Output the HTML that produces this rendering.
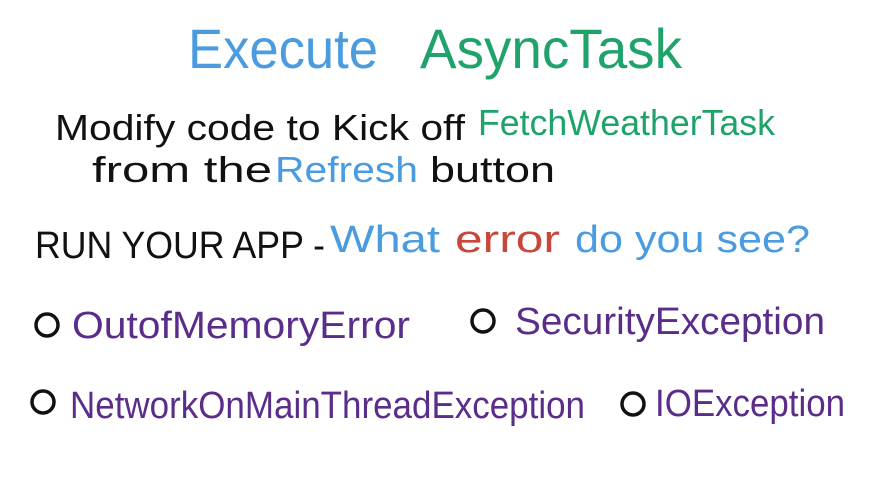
<!DOCTYPE html>
<html><head><meta charset="utf-8"><style>
html,body{margin:0;padding:0;background:#fff;width:889px;height:500px;overflow:hidden}
svg{display:block}
text{font-family:"Liberation Sans",sans-serif}
</style></head><body>
<svg width="889" height="500" viewBox="0 0 889 500" xmlns="http://www.w3.org/2000/svg">
<rect width="889" height="500" fill="#fff"/>
<text x="188" y="68" font-size="56" fill="#4a9be0" textLength="190" lengthAdjust="spacingAndGlyphs">Execute</text>
<text x="420" y="68" font-size="56" fill="#1fa36b" textLength="262" lengthAdjust="spacingAndGlyphs">AsyncTask</text>
<text x="55" y="140" font-size="36" fill="#111" textLength="410" lengthAdjust="spacingAndGlyphs">Modify code to Kick off</text>
<text x="478" y="135" font-size="36" fill="#1fa36b" textLength="297" lengthAdjust="spacingAndGlyphs">FetchWeatherTask</text>
<text x="92" y="182" font-size="36" fill="#111" textLength="180" lengthAdjust="spacingAndGlyphs">from the</text>
<text x="275" y="182" font-size="36" fill="#4a9be0" textLength="143" lengthAdjust="spacingAndGlyphs">Refresh</text>
<text x="430" y="182" font-size="36" fill="#111" textLength="125" lengthAdjust="spacingAndGlyphs">button</text>
<text x="35" y="258" font-size="38" fill="#111" textLength="290" lengthAdjust="spacingAndGlyphs">RUN YOUR APP -</text>
<text x="330" y="252" font-size="38" fill="#4a9be0" textLength="110" lengthAdjust="spacingAndGlyphs">What</text>
<text x="455" y="252" font-size="38" fill="#c9463a" textLength="105" lengthAdjust="spacingAndGlyphs">error</text>
<text x="575" y="252" font-size="38" fill="#4a9be0" textLength="235" lengthAdjust="spacingAndGlyphs">do you see?</text>
<g fill="none" stroke="#111" stroke-width="3.5">
<circle cx="47" cy="325" r="11"/>
<circle cx="483" cy="321" r="11"/>
<circle cx="43" cy="402" r="11"/>
<circle cx="633" cy="404" r="11"/>
</g>
<g fill="#5a2d8a" font-size="38">
<text x="72" y="338" textLength="338" lengthAdjust="spacingAndGlyphs">OutofMemoryError</text>
<text x="515" y="334" textLength="310" lengthAdjust="spacingAndGlyphs">SecurityException</text>
<text x="70" y="418" textLength="515" lengthAdjust="spacingAndGlyphs">NetworkOnMainThreadException</text>
<text x="655" y="416" textLength="190" lengthAdjust="spacingAndGlyphs">IOException</text>
</g>
</svg>
</body></html>
